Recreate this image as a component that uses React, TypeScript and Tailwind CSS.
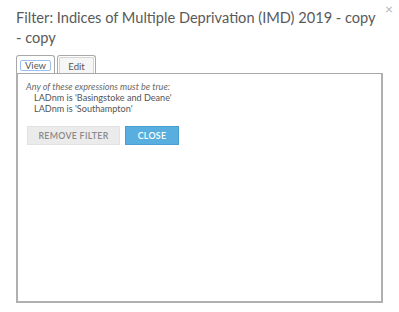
import React, { useState } from 'react';

export default function App() {
  const [tab, setTab] = useState<'view' | 'edit'>('view');

  return (
    <div className="relative w-[399px] h-[312px] bg-white font-['Lato','Open_Sans',sans-serif] text-[#4c4c4c]">
      <button className="absolute right-[6px] top-[2px] text-[14px] leading-none text-[#b5b5b5]" aria-label="Close">
        ×
      </button>
      <div className="flex flex-col px-[16px] pt-[8px]">
        <h1 className="text-[14.6px] leading-[20px] text-[#5a5a5a]">
          Filter: Indices of Multiple Deprivation (IMD) 2019 - copy - copy
        </h1>
        <div className="flex items-end gap-[2px] mt-[7px] h-[18px]">
          <div className="w-[39px] h-[18px] pt-[4px] flex justify-center border border-b-0 border-[#a8a8a8] rounded-t-[3px] bg-white">
            <button
              onClick={() => setTab('view')}
              className="h-[11px] w-[31px] text-[9.5px] leading-[9px] border border-[#9cc0ee] rounded-[2px] text-[#555]"
            >
              View
            </button>
          </div>
          <div className="w-[39px] h-[18px] flex justify-center border border-b-0 border-[#a8a8a8] rounded-t-[3px] bg-white p-[1px] pb-0">
            <button
              onClick={() => setTab('edit')}
              className="w-full h-full pt-[2px] border border-b-0 border-[#d4d4d4] rounded-t-[2px] bg-[#f6f6f6] text-[9.5px] leading-[9px] text-[#555]"
            >
              Edit
            </button>
          </div>
        </div>
        <div className="h-[230px] border-t border-x-2 border-b-2 border-t-[#a8a8a8] border-x-[#b0b0b0] border-b-[#b0b0b0] px-[8px] pt-[7px]">
          <p className="text-[9.1px] leading-[11px] italic text-[#6a6a6a]">Any of these expressions must be true:</p>
          <p className="text-[9.1px] leading-[11px] pl-[8px] text-[#555]">LADnm is 'Basingstoke and Deane'</p>
          <p className="text-[9.1px] leading-[11px] pl-[8px] text-[#555]">LADnm is 'Southampton'</p>
          <div className="flex gap-[5px] mt-[12px] pl-[1px]">
            <button className="h-[19px] w-[93px] bg-[#ebebeb] border border-[#e2e2e2] text-[8.8px] tracking-[0.3px] font-semibold text-[#8a8a8a]">
              REMOVE FILTER
            </button>
            <button className="h-[19px] w-[54px] bg-[#58aede] border border-[#4a9fd2] text-[8.8px] tracking-[0.3px] font-semibold text-white">
              CLOSE
            </button>
          </div>
        </div>
      </div>
    </div>
  );
}
